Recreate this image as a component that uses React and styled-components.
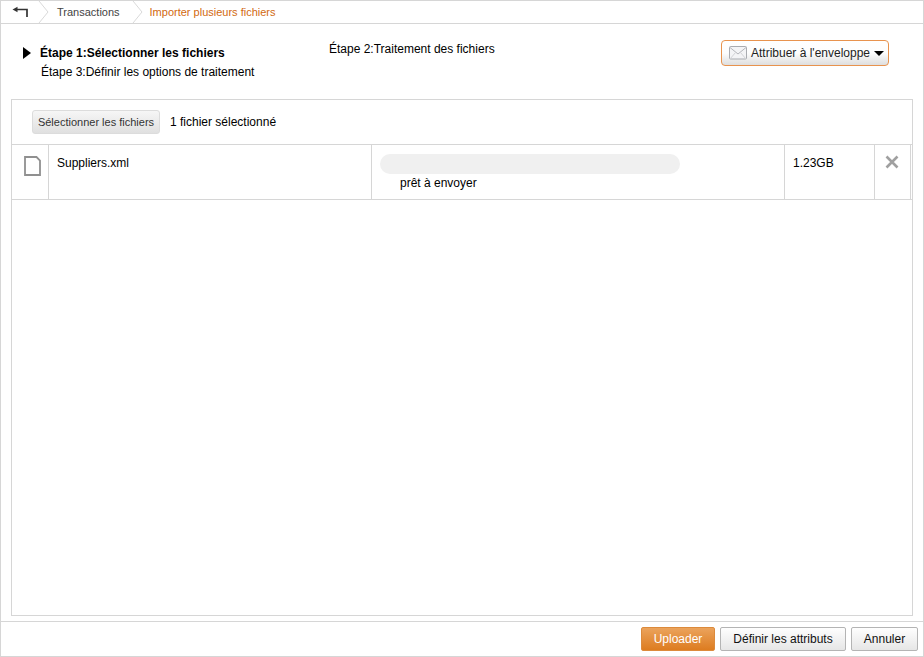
import React from 'react'
import styled, { createGlobalStyle } from 'styled-components'

const Global = createGlobalStyle`
  html, body { margin: 0; padding: 0; background: #fff; }
  body { font-family: "Liberation Sans", Arial, sans-serif; font-size: 12px; color: #000; }
`

const Frame = styled.div`
  box-sizing: border-box;
  width: 924px;
  height: 657px;
  border: 1px solid #d6d6d6;
  display: flex;
  flex-direction: column;
`
const Crumbs = styled.div`
  height: 22px;
  flex: none;
  display: flex;
  align-items: center;
  border-bottom: 1px solid #d6d6d6;
`
const BackBtn = styled.div`
  width: 37px;
  height: 22px;
  display: flex;
  align-items: center;
  padding-left: 11px;
  box-sizing: border-box;
`
const Crumb = styled.div`
  height: 22px;
  display: flex;
  align-items: center;
  font-size: 11px;
  color: ${(p) => (p.$active ? '#d2690f' : '#444')};
`
const CrumbText = styled.span`
  padding-left: ${(p) => p.$pad}px;
  padding-right: ${(p) => p.$right}px;
`
const Steps = styled.div`
  flex: none;
  height: 75px;
  display: flex;
  box-sizing: border-box;
  padding: 16px 34px 0 22px;
`
const StepCol = styled.div`
  width: 306px;
  padding-top: 3px;
`
const StepRow = styled.div`
  display: flex;
  align-items: center;
  height: 19px;
`
const StepArrow = styled.span`
  width: 0;
  height: 0;
  border-left: 8px solid #000;
  border-top: 6px solid transparent;
  border-bottom: 6px solid transparent;
  margin-right: 9px;
`
const StepCurrent = styled.span`
  font-weight: bold;
`
const StepNext = styled.span`
  padding-left: 18px;
`
const StepMiddle = styled.div`
  flex: 1;
  height: 19px;
  line-height: 19px;
`
const EnvelopeBtn = styled.button`
  box-sizing: border-box;
  width: 168px;
  height: 26px;
  padding: 0 0 0 7px;
  display: flex;
  align-items: center;
  font: 12px "Liberation Sans", Arial, sans-serif;
  color: #222;
  background: linear-gradient(#fff 0%, #fdfdfd 50%, #dedede 100%);
  border: 1px solid #e8934e;
  border-radius: 4px;
`
const EnvelopeLabel = styled.span`
  margin: 0 4px 0 4px;
  white-space: nowrap;
`
const Caret = styled.span`
  width: 0;
  height: 0;
  border-top: 5px solid #000;
  border-left: 5px solid transparent;
  border-right: 5px solid transparent;
`
const Panel = styled.div`
  box-sizing: border-box;
  flex: none;
  width: 902px;
  height: 517px;
  margin-left: 10px;
  border: 1px solid #d6d6d6;
`
const PanelBar = styled.div`
  height: 45px;
  box-sizing: border-box;
  padding: 0 20px;
  display: flex;
  align-items: center;
  gap: 10px;
  border-bottom: 1px solid #d6d6d6;
`
const SelectBtn = styled.button`
  box-sizing: border-box;
  width: 128px;
  height: 24px;
  padding: 0;
  font: 11px "Liberation Sans", Arial, sans-serif;
  color: #333;
  background: linear-gradient(#f6f6f6, #e0e0e0);
  border: 1px solid #dcdcdc;
  border-radius: 3px;
`
const FileRow = styled.div`
  height: 55px;
  box-sizing: border-box;
  display: grid;
  grid-template-columns: 37px 323px 413px 90px 36px;
  border-bottom: 1px solid #d6d6d6;
`
const Cell = styled.div`
  box-sizing: border-box;
  border-right: 1px solid #d6d6d6;
  padding: ${(p) => p.$pad || '0'};
`
const ProgressCell = styled(Cell)`
  padding: 9px 0 0 8px;
`
const ProgressTrack = styled.div`
  width: 300px;
  height: 20px;
  border-radius: 10px;
  background: #f0f0f0;
`
const Status = styled.div`
  padding: 2px 0 0 20px;
  line-height: 14px;
`
const Footer = styled.div`
  flex: 1;
  margin-top: 5px;
  box-sizing: border-box;
  border-top: 1px solid #d6d6d6;
  padding: 5px 5px 0 0;
  display: flex;
  justify-content: flex-end;
  gap: 5px;
`
const ActionBtn = styled.button`
  box-sizing: border-box;
  width: ${(p) => p.$w}px;
  height: 24px;
  padding: 0;
  font: 12px "Liberation Sans", Arial, sans-serif;
  color: ${(p) => (p.$primary ? '#fff' : '#111')};
  background: ${(p) =>
    p.$primary ? 'linear-gradient(#eba35c, #dd7c20)' : 'linear-gradient(#fefefe, #e6e6e6)'};
  border: 1px solid ${(p) => (p.$primary ? '#dc8a3c' : '#b4b4b4')};
  border-radius: 2px;
`

const BackIcon = () => (
  <svg width="16" height="12" viewBox="0 0 16 12">
    <path d="M3 3.5H15V11" fill="none" stroke="#333" strokeWidth="1.7" />
    <path d="M0.5 3.5 L5.5 0.8 V6.2 Z" fill="#333" />
  </svg>
)
const Chevron = () => (
  <svg width="11" height="22" viewBox="0 0 11 22">
    <path d="M1 0 L10 11 L1 22" fill="none" stroke="#d9d9d9" />
  </svg>
)
const EnvelopeIcon = () => (
  <svg width="18" height="14" viewBox="0 0 18 14">
    <rect x="0.5" y="0.5" width="17" height="12.5" rx="1" fill="#f4f4f6" stroke="#a9abb0" />
    <path d="M1 1.5 L9 8 L17 1.5" fill="none" stroke="#b4b6bb" />
    <path d="M1 13 L6.5 6.5 M17 13 L11.5 6.5" fill="none" stroke="#d2d3d6" />
  </svg>
)
const FileIcon = () => (
  <svg width="17" height="20" viewBox="0 0 17 20">
    <path d="M1 1 H12.5 L16 4.5 V19 H1 Z" fill="#fff" stroke="#909090" strokeWidth="1.8" />
  </svg>
)
const CloseIcon = () => (
  <svg width="14" height="14" viewBox="0 0 14 14">
    <path d="M1.5 1.5 L12.5 12.5 M12.5 1.5 L1.5 12.5" stroke="#a0a0a0" strokeWidth="2.6" />
  </svg>
)

export default function App() {
  return (
    <Frame>
      <Global />
      <Crumbs>
        <BackBtn>
          <BackIcon />
        </BackBtn>
        <Chevron />
        <Crumb>
          <CrumbText $pad={8} $right={12}>Transactions</CrumbText>
        </Crumb>
        <Chevron />
        <Crumb $active>
          <CrumbText $pad={7} $right={0}>Importer plusieurs fichiers</CrumbText>
        </Crumb>
      </Crumbs>
      <Steps>
        <StepCol>
          <StepRow>
            <StepArrow />
            <StepCurrent>Étape 1:Sélectionner les fichiers</StepCurrent>
          </StepRow>
          <StepRow>
            <StepNext>Étape 3:Définir les options de traitement</StepNext>
          </StepRow>
        </StepCol>
        <StepMiddle>Étape 2:Traitement des fichiers</StepMiddle>
        <EnvelopeBtn>
          <EnvelopeIcon />
          <EnvelopeLabel>Attribuer à l'enveloppe</EnvelopeLabel>
          <Caret />
        </EnvelopeBtn>
      </Steps>
      <Panel>
        <PanelBar>
          <SelectBtn>Sélectionner les fichiers</SelectBtn>
          <span>1 fichier sélectionné</span>
        </PanelBar>
        <FileRow>
          <Cell $pad="11px 0 0 12px">
            <FileIcon />
          </Cell>
          <Cell $pad="11px 0 0 8px">Suppliers.xml</Cell>
          <ProgressCell>
            <ProgressTrack />
            <Status>prêt à envoyer</Status>
          </ProgressCell>
          <Cell $pad="11px 0 0 8px">1.23GB</Cell>
          <Cell $pad="10px 0 0 10px">
            <CloseIcon />
          </Cell>
        </FileRow>
      </Panel>
      <Footer>
        <ActionBtn $primary $w={74}>Uploader</ActionBtn>
        <ActionBtn $w={126}>Définir les attributs</ActionBtn>
        <ActionBtn $w={67}>Annuler</ActionBtn>
      </Footer>
    </Frame>
  )
}
